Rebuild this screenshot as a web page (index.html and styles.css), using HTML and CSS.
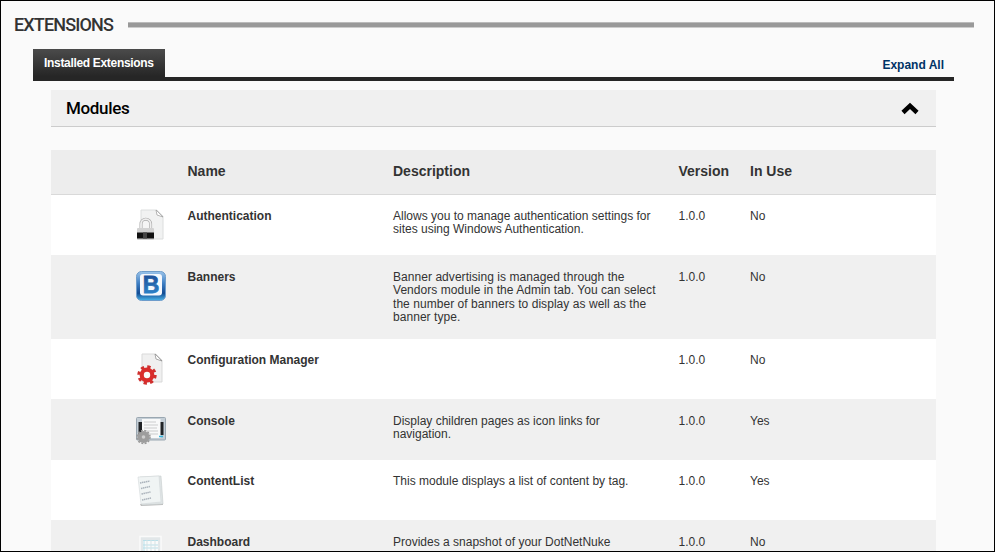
FILE: index.html
```html
<!DOCTYPE html>
<html lang="en">
<head>
<meta charset="utf-8">
<title>Extensions</title>
<link rel="stylesheet" href="styles.css">
</head>
<body>
<main class="page">
  <header class="title"><h1>EXTENSIONS</h1><span class="rule"></span></header>
  <nav class="tabs"><a class="tab">Installed Extensions</a><a class="expand">Expand All</a></nav>
  <section class="panel">
    <h2 class="panel-head"><span>Modules</span>
      <svg width="18" height="13" viewBox="0 0 18 13"><path d="M2 10.500 9 3.800l7 6.700" fill="none" stroke="#000" stroke-width="4.500"/></svg>
    </h2>
    <div class="table">
      <div class="row head"><span></span><b>Name</b><b>Description</b><b>Version</b><b>In Use</b></div>
      <div class="row">
        <svg class="icon" viewBox="0 0 32 32"><path d="M6 1h16l6 6v23H6z" fill="#f1f2f2" stroke="#dcdede"/><path d="M21 1l7 7-6-2z" fill="#fff" stroke="#999" stroke-width=".7"/><path d="M6 20v-5a4.800 4.800 0 0 1 9.600 0v5" fill="#f5f5f5" stroke="#aaa" stroke-width="3"/><path d="M6 20v-5a4.800 4.800 0 0 1 9.600 0v5" fill="none" stroke="#eee" stroke-width="1.800"/><rect x="2" y="19" width="17" height="12" rx="1" fill="#d2d2d2"/><rect x="2" y="23.500" width="17" height="6" fill="#111"/><rect x="8" y="23.500" width="4" height="6" fill="#444"/></svg>
        <b>Authentication</b><p>Allows you to manage authentication settings for<br>sites using Windows Authentication.</p><span>1.0.0</span><span>No</span>
      </div>
      <div class="row alt tall">
        <svg class="icon" viewBox="0 0 32 32"><defs><linearGradient id="blue" x2="0" y2="1"><stop stop-color="#9cc4ea"/><stop offset=".4" stop-color="#3f80c5"/><stop offset=".75" stop-color="#124b93"/><stop offset="1" stop-color="#4ab5e8"/></linearGradient><linearGradient id="letter" x2="0" y2="1"><stop stop-color="#1c4791"/><stop offset="1" stop-color="#2f8dd2"/></linearGradient></defs><rect x="1.500" y="1.500" width="29" height="29" rx="5" fill="url(#blue)" stroke="#6e9ccb"/><rect x="5" y="4" width="22" height="21.500" rx="3" fill="#f5f8fd"/><text x="16" y="23" text-anchor="middle" class="letter" fill="url(#letter)" stroke="url(#letter)">B</text></svg>
        <b>Banners</b><p>Banner advertising is managed through the<br>Vendors module in the Admin tab. You can select<br>the number of banners to display as well as the<br>banner type.</p><span>1.0.0</span><span>No</span>
      </div>
      <div class="row">
        <svg class="icon" viewBox="0 0 32 32"><path d="M7 1h14l6 6v22H7z" fill="#f0f0f0" stroke="#d9d9d9"/><path d="M20 1l7 7-6-2z" fill="#fff" stroke="#888" stroke-width=".7"/><circle cx="12" cy="22" r="8.200" fill="none" stroke="#cf302e" stroke-width="3" stroke-dasharray="3.300 3.140"/><circle cx="12" cy="22" r="5.300" fill="#fafafa" stroke="#d92c2b" stroke-width="4.200"/></svg>
        <b>Configuration Manager</b><p></p><span>1.0.0</span><span>No</span>
      </div>
      <div class="row alt medium">
        <svg class="icon" viewBox="0 0 32 32"><rect x="1.500" y="3.500" width="29" height="22.500" rx="1" fill="#c4ced6" stroke="#9aa7b1"/><rect x="3.500" y="8" width="25" height="13" fill="#202326"/><rect x="7" y="5" width="18.500" height="19" fill="#f8f9f9"/><path d="M9 8h12M9 11h14M9 14h13M9 17h14M12 20h11" stroke="#cbcccd"/><path d="M24 22.500h4" stroke="#35b5dc" stroke-width="1.500"/><circle cx="8.500" cy="23" r="6.500" fill="none" stroke="#999" stroke-width="1.500" stroke-dasharray="2 1.400"/><circle cx="8.500" cy="23" r="6" fill="#9d9d9d"/><circle cx="8.500" cy="23" r="1.800" fill="#cecece"/></svg>
        <b>Console</b><p>Display children pages as icon links for<br>navigation.</p><span>1.0.0</span><span>Yes</span>
      </div>
      <div class="row">
        <svg class="icon" viewBox="0 0 32 32"><path d="M5 30l23-1v2l-22 1z" fill="#bbb"/><path d="M5 3l21-1 2 28-21 1z" fill="#dfe4e5" stroke="#c6cccd" stroke-width=".6"/><path d="M3 3l21-1 2 26-20 2z" fill="#f0f4f4" stroke="#d3d9da" stroke-width=".6"/><path d="M5 9l10-2M6 14.500l9-2M6.500 20l9-2M7 26l9-2" stroke="#aab2bb" stroke-width="1.500" stroke-dasharray="1.500 .5"/></svg>
        <b>ContentList</b><p>This module displays a list of content by tag.</p><span>1.0.0</span><span>Yes</span>
      </div>
      <div class="row alt">
        <svg class="icon" viewBox="0 0 32 32"><path d="M5 1.500h21V31H5z" fill="#e2e7e9" stroke="#fafafa" stroke-width="1.500"/><path d="M8 5h15v26H8z" fill="#fafafa"/><path d="M8 5.500h15M8 10h15M8 13h15M9 5v26" stroke="#b9dfe9"/><path d="M12 5v26M16 5v26M20 5v26" stroke="#d6e3e6"/></svg>
        <b>Dashboard</b><p>Provides a snapshot of your DotNetNuke</p><span>1.0.0</span><span>No</span>
      </div>
    </div>
  </section>
</main>
</body>
</html>
```
FILE: styles.css
```css
* { box-sizing: border-box; }
body { margin: 0; font-family: "Liberation Sans", Arial, sans-serif; font-size: 12px; color: #333; }
h1, h2, p { margin: 0; font-weight: normal; }
.page { width: 995px; height: 552px; overflow: hidden; border: 1px solid #000; background: #fafafa; padding: 12px 20px 0 13px; }
.title { height: 24px; display: flex; align-items: center; justify-content: space-between; }
.title h1 { font: 500 18px/24px Roboto, sans-serif; letter-spacing: -0.85px; white-space: nowrap; }
.rule { width: 846px; height: 6px; background: #999; border-top: 1px solid #bbb; border-bottom: 1px solid #ccc; }
.tabs { height: 32px; margin: 12px 20px 0 19px; display: flex; justify-content: space-between; border-bottom: 4px solid #262626; }
.tab { width: 132px; height: 32px; flex: none; padding-left: 11px; line-height: 28px; font-weight: bold; letter-spacing: -0.32px; color: #fff; white-space: nowrap; background: linear-gradient(#4b4b4b, #262626 85%); }
.expand { margin-right: 10px; line-height: 32px; font-weight: bold; color: #036; white-space: nowrap; }
.panel { width: 885px; margin: 9px 0 0 37px; }
.panel-head { height: 37px; padding: 0 17px 0 15px; display: flex; align-items: center; justify-content: space-between; background: #f0f0f0; border-bottom: 1px solid #ccc; font: 500 17px/36px Roboto, sans-serif; letter-spacing: -0.35px; color: #000; }
.table { margin-top: 23px; }
.row { display: grid; grid-template-columns: 136.5px 205.5px 285.5px 71.5px 1fr; height: 60px; padding-top: 15px; background: #fff; line-height: 13.4px; }
.row.alt { padding-top: 16px; background: #f0f0f0; }
.row.tall { height: 84px; }
.row.medium { height: 61px; }
.row.head { height: 45px; padding-top: 13px; background: #ededed; border-bottom: 1px solid #d9d9d9; font-size: 14px; line-height: 16px; }
.row p { white-space: nowrap; }
.row.tall p { letter-spacing: 0.05px; }
.icon { width: 32px; height: 32px; margin: -1px 0 0 84px; }
.letter { font: bold 23px "Liberation Sans", Arial, sans-serif; stroke-width: 0.8px; }
```
